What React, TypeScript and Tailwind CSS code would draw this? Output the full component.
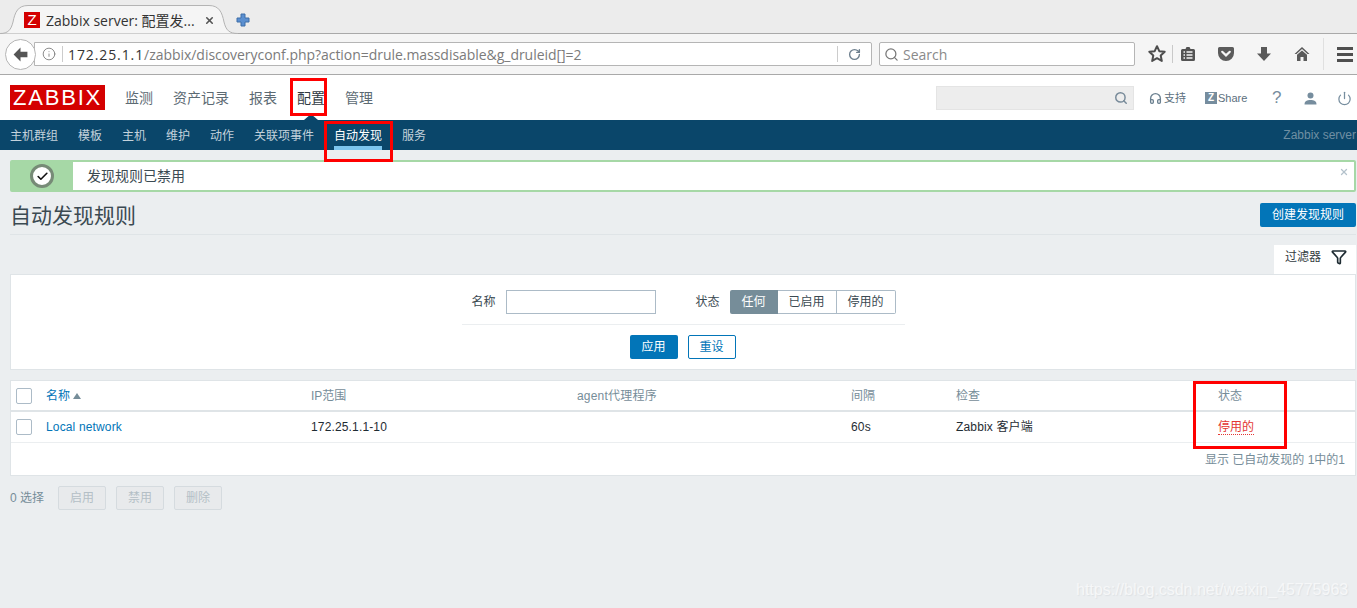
import React from "react";
import { Info, Search, Funnel, Check, X, RotateCw, Power, Headphones } from "lucide-react";

const zbx = "font-['Liberation_Sans','Noto_Sans_CJK_SC',sans-serif]";
const ui = "font-['Open_Sans','Noto_Sans_CJK_SC',sans-serif]";

const topNav = ["监测", "资产记录", "报表", "配置", "管理"];
const subNav = ["主机群组", "模板", "主机", "维护", "动作", "关联项事件", "自动发现", "服务"];

function Checkbox() {
  return <span className="block w-4 h-4 bg-white border border-[#acbbc7] rounded-[2px]" />;
}

function TabShape() {
  return (
    <svg className="absolute left-0 top-0" width="238" height="29" viewBox="0 0 238 29">
      <path d="M0 28.5 C8 28.5 11 25 13 17 C15 7 18 .5 28 .5 L209 .5 C219 .5 222 7 224 17 C226 25 229 28.5 238 28.5" fill="#f5f5f5" stroke="#b4b4b4" />
    </svg>
  );
}

function ToolIcons() {
  return (
    <div className="flex items-center ml-[11px] h-full">
      <svg width="20" height="20" viewBox="0 0 20 20" className="ml-[1px]">
        <path d="M10 2.2l2.3 5 5.4.6-4 3.7 1.1 5.4L10 14.2l-4.8 2.7 1.1-5.4-4-3.7 5.4-.6z" fill="none" stroke="#4d4d4d" strokeWidth="2" strokeLinejoin="round" />
      </svg>
      <span className="w-px h-[18px] bg-[#c9c9c9] ml-[5px]" />
      <svg width="16" height="16" viewBox="0 0 16 16" className="ml-[7px]">
        <path d="M1 4.5a1.5 1.5 0 0 1 1.5-1.5H5.5L6.5 1h3l1 2h3A1.5 1.5 0 0 1 15 4.5v9a1.5 1.5 0 0 1-1.5 1.5h-11A1.5 1.5 0 0 1 1 13.500z" fill="#535353" />
        <path d="M3.500 6h1.500M3.500 9h1.500M3.500 12h1.500M6.500 6h6M6.500 9h6M6.500 12h6" stroke="#f5f5f5" strokeWidth="1.300" />
      </svg>
      <svg width="16" height="14" viewBox="0 0 16 14" className="ml-[22px]">
        <path d="M1.500 0h13A1.500 1.500 0 0 1 16 1.500V6a8 8 0 0 1-16 0V1.500A1.500 1.500 0 0 1 1.500 0z" fill="#5c5c5c" />
        <path d="M4.200 4.800L8 8.400l3.800-3.600" fill="none" stroke="#f5f5f5" strokeWidth="2.200" strokeLinecap="round" />
      </svg>
      <svg width="16" height="16" viewBox="0 0 16 16" className="ml-[22px]">
        <path d="M5 1h6v6.500h4L8 15 1 7.500h4z" fill="#5a5a5a" />
      </svg>
      <svg width="16" height="16" viewBox="0 0 16 16" className="ml-[22px]">
        <path d="M8 1L0.500 8h2L8 3l5.500 5h2z" fill="#5a5a5a" />
        <path d="M3 8.800L8 4.400l5 4.400V15H9.500v-4h-3v4H3z" fill="#5a5a5a" />
      </svg>
      <span className="w-px h-[32px] bg-[#e0e0e0] ml-[13px]" />
      <span className="flex flex-col gap-[3px] ml-[13px]">
        <span className="block w-4 h-[3px] bg-[#4f4f4f]" />
        <span className="block w-4 h-[3px] bg-[#4f4f4f]" />
        <span className="block w-4 h-[3px] bg-[#4f4f4f]" />
      </span>
    </div>
  );
}

function Browser() {
  return (
    <div className={ui}>
      <div className="h-[34px] bg-[#ececec] border-b border-[#a9a9a9] flex pt-[5px]">
        <div className="relative w-[238px] h-[29px] shrink-0">
          <TabShape />
          <div className="relative flex items-center h-[29px] pl-[24px] pt-[1px]">
            <span className="w-4 h-4 bg-[#d40000] text-white text-[15px] leading-4 text-center font-['Liberation_Sans',sans-serif]">Z</span>
            <span className="ml-[6px] text-[14px] text-[#333] whitespace-nowrap">Zabbix server: 配置发...</span>
            <X className="ml-[9px]" size={11} strokeWidth={3.5} color="#555" />
          </div>
        </div>
        <svg width="14" height="14" viewBox="0 0 14 14" className="-ml-[2px] mt-[8px]">
          <path d="M5 1h4v4h4v4H9v4H5V9H1V5h4z" fill="#5b8fd0" stroke="#3f6ea8" strokeWidth="1" strokeLinejoin="round" />
        </svg>
      </div>
      <div className="h-[41px] bg-[#f5f5f5] border-b border-[#a9a9a9] flex items-center pl-[5px]">
        <div className="relative z-10 w-[31px] h-[31px] rounded-full bg-white border border-[#b5b5b5] flex items-center justify-center shrink-0">
          <svg width="17" height="17" viewBox="0 0 16 16">
            <path d="M8 1.500L1.500 8 8 14.500V10.500h6.500v-5H8z" fill="#555" />
          </svg>
        </div>
        <div className="-ml-[2px] w-[838px] h-[24px] bg-white border border-[#b5b5b5] rounded-r-[2px] flex items-center shrink-0">
          <Info className="ml-[7px]" size={14} color="#7b7b7b" strokeWidth={1.500} />
          <span className="w-px h-[16px] bg-[#ccc] ml-[6px]" />
          <span className="ml-[5px] text-[14px] whitespace-nowrap text-[#7b7b7b] tracking-[-0.04px]">
            <span className="text-[#333] tracking-[0.9px]">172.25.1.1</span>/zabbix/discoveryconf.php?action=drule.massdisable&amp;g_druleid[]=2
          </span>
          <span className="ml-auto w-px h-[16px] bg-[#ccc]" />
          <RotateCw className="ml-[10px] mr-[10px]" size={13} color="#6d7f8e" strokeWidth={2.500} />
        </div>
        <div className="ml-[7px] w-[256px] h-[24px] bg-white border border-[#b5b5b5] rounded-[2px] flex items-center shrink-0">
          <Search className="ml-[4px]" size={15} color="#777" strokeWidth={2} />
          <span className="ml-[4px] text-[14px] text-[#8a8a8a]">Search</span>
        </div>
        <ToolIcons />
      </div>
    </div>
  );
}

function Header() {
  return (
    <div className="h-[45px] bg-white flex items-center pl-[10px] pr-[5px] relative">
      <div className="w-[95px] h-[25px] bg-[#d40000] text-white text-[22px] leading-[25px] text-center tracking-[1.8px]">ZABBIX</div>
      <nav className="flex gap-5 ml-5 mt-[2px] text-[14px] text-[#5c6a73]">
        {topNav.map((t) => (
          <span key={t} className={t === "配置" ? "text-[#2f3a42]" : ""}>{t}</span>
        ))}
      </nav>
      <div className="ml-auto w-[198px] h-[24px] bg-[#ededed] border border-[#e4e4e4] flex items-center justify-end pr-[5px]">
        <Search size={14} color="#778a99" strokeWidth={2.500} />
      </div>
      <div className="flex items-center ml-[15px] mt-[1px] text-[11px] text-[#5c6f7d]">
        <Headphones size={13} color="#6b8090" strokeWidth={2.500} />
        <span className="ml-[2px] w-[28px]">支持</span>
        <span className="ml-[13px] w-[12px] h-[12px] bg-[#768d9e] text-white text-[10px] leading-[12px] font-bold text-center">Z</span>
        <span className="ml-[1px] w-[30px]">Share</span>
        <span className="ml-[24px] w-[9px] text-[#768d9e] text-[17px] leading-4">?</span>
        <svg width="13" height="13" viewBox="0 0 13 13" className="ml-[23px]">
          <circle cx="6.500" cy="3.500" r="3" fill="#768d9e" />
          <path d="M0.500 12.500C0.500 9 3 8 6.500 8s6 1 6 4.500z" fill="#768d9e" />
        </svg>
        <Power className="ml-[20px]" size={15} color="#768d9e" strokeWidth={2} />
      </div>
      <svg className="absolute left-[304px] bottom-0" width="14" height="6" viewBox="0 0 14 6">
        <path d="M0 6L7 0l7 6z" fill="#0a466a" />
      </svg>
    </div>
  );
}

function SubNav() {
  return (
    <div className="h-[30px] bg-[#0a466a] flex items-stretch pl-[10px] text-[12px] text-[#c4d2dc]">
      <div className="flex gap-5">
        {subNav.map((t) => (
          <span key={t} className={"flex items-center pt-[1px] " + (t === "自动发现" ? "text-white border-b-4 border-[#7cc5ee] pt-[5px]" : "")}>{t}</span>
        ))}
      </div>
      <span className="ml-auto flex items-center text-[#6f8fa3] mr-px">Zabbix server</span>
    </div>
  );
}

function Alert() {
  return (
    <div className="ml-[10px] mr-[1px] mt-[10px] h-[32px] border-2 border-[#a6d8a6] rounded-[2px] bg-white flex relative">
      <div className="w-[62px] bg-[#a6d8a6] flex items-center justify-center shrink-0 -ml-[1px]">
        <span className="w-[24px] h-[24px] rounded-full bg-white border-[3px] border-[#778b77] flex items-center justify-center">
          <Check size={13} color="#111" strokeWidth={3} />
        </span>
      </div>
      <span className="ml-[14px] text-[14px] leading-[28px] text-[#3b4a52]">发现规则已禁用</span>
      <X className="absolute right-[5px] top-[5px]" size={10} color="#b4c2cc" strokeWidth={3} />
    </div>
  );
}

function TitleRow() {
  return (
    <div className="ml-[10px] mr-[1px] h-[43px] border-b border-[#dfe4e7] flex items-center justify-between">
      <h1 className="text-[21px] leading-none text-[#3b4a52] mt-[4px]">自动发现规则</h1>
      <button className="w-[96px] h-[24px] mt-[4px] bg-[#0275b8] text-white text-[12px] rounded-[2px]">创建发现规则</button>
    </div>
  );
}

function Filter() {
  return (
    <div className="ml-[10px] mr-[1px] mt-[10px]">
      <div className="flex justify-end">
        <div className="w-[82px] h-[29px] bg-white flex items-center pl-[11px] pb-[5px] text-[12px] text-[#333c42]">
          过滤器
          <Funnel className="ml-[10px]" size={16} color="#1f2c33" strokeWidth={2.500} />
        </div>
      </div>
      <div className="h-[96px] bg-white border border-[#dfe4e7] flex flex-col items-center text-[12px] text-[#3b4a52]">
        <div className="w-[443px] h-[50px] border-b border-[#ebeef0] flex items-start pt-[15px] pl-[10px]">
          <span className="leading-[24px]">名称</span>
          <span className="ml-[10px] w-[150px] h-[24px] border border-[#acbbc7] bg-white" />
          <span className="ml-[40px] leading-[24px]">状态</span>
          <div className="ml-[10px] flex h-[24px] leading-[22px] text-center">
            <span className="w-[48px] bg-[#768d99] text-white rounded-l-[2px] leading-[24px]">任何</span>
            <span className="w-[59px] border border-l-0 border-[#acbbc7]">已启用</span>
            <span className="w-[59px] border border-l-0 border-[#acbbc7] rounded-r-[2px]">停用的</span>
          </div>
        </div>
        <div className="flex gap-[10px] mt-[10px] -ml-[1px]">
          <button className="w-[48px] h-[24px] bg-[#0275b8] text-white rounded-[2px]">应用</button>
          <button className="w-[48px] h-[24px] bg-white border border-[#0275b8] text-[#0275b8] rounded-[2px]">重设</button>
        </div>
      </div>
    </div>
  );
}

function Table() {
  const cols = "grid grid-cols-[35px_265px_266px_274px_105px_262px_1fr] items-center";
  return (
    <div className="ml-[10px] mr-[1px] mt-[10px] h-[96px] bg-white border border-[#dfe4e7] text-[12px]">
      <div className={cols + " h-[29px] border-b-[2px] border-[#dfe4e7] box-content text-[#768d99]"}>
        <span className="pl-[5px]"><Checkbox /></span>
        <span className="text-[#0275b8] flex items-center">名称<span className="ml-[3px] w-0 h-0 border-x-[4px] border-x-transparent border-b-[6px] border-b-[#768d99]" /></span>
        <span>IP范围</span>
        <span className="tracking-[0.2px]">agent代理程序</span>
        <span>间隔</span>
        <span>检查</span>
        <span>状态</span>
      </div>
      <div className={cols + " h-[31px] pb-[1px] border-b border-[#ebeef0] text-[#1f2c33] tracking-[0.15px]"}>
        <span className="pl-[5px]"><Checkbox /></span>
        <span className="text-[#0275b8]">Local network</span>
        <span>172.25.1.1-10</span>
        <span />
        <span>60s</span>
        <span>Zabbix 客户端</span>
        <span><span className="text-[#e33734] border-b border-dotted border-[#e33734] tracking-normal">停用的</span></span>
      </div>
      <div className="text-right pr-[10px] pt-[8px] text-[#768d99]">显示 已自动发现的 1中的1</div>
    </div>
  );
}

function Actions() {
  const btn = "w-[48px] h-[24px] border border-[#d5dbdf] bg-[#e8eaec] text-[#b4bfc6] rounded-[2px] text-center leading-[22px]";
  return (
    <div className="ml-[10px] mt-[10px] flex items-center text-[12px] text-[#768d99]">
      <span className="w-[48px]">0 选择</span>
      <div className="flex gap-[10px]">
        <span className={btn}>启用</span>
        <span className={btn}>禁用</span>
        <span className={btn}>删除</span>
      </div>
    </div>
  );
}

export default function App() {
  return (
    <div className="relative w-[1357px] h-[608px] overflow-hidden bg-[#ebeef0]">
      <Browser />
      <div className={zbx}>
        <Header />
        <SubNav />
        <Alert />
        <TitleRow />
        <Filter />
        <Table />
        <Actions />
      </div>
      <span className="absolute left-[290px] top-[78px] w-[37px] h-[38px] border-[3px] border-[#ff0000]" />
      <span className="absolute left-[324px] top-[121px] w-[69px] h-[41px] border-[3px] border-[#ff0000]" />
      <span className="absolute left-[1193px] top-[381px] w-[94px] h-[68px] border-[3px] border-[#ff0000]" />
      <span className={"absolute left-[1076px] top-[578px] text-[16px] text-[#f6f7f8] [text-shadow:1px_1px_1px_#dde1e4] " + zbx}>https://blog.csdn.net/weixin_45775963</span>
    </div>
  );
}
